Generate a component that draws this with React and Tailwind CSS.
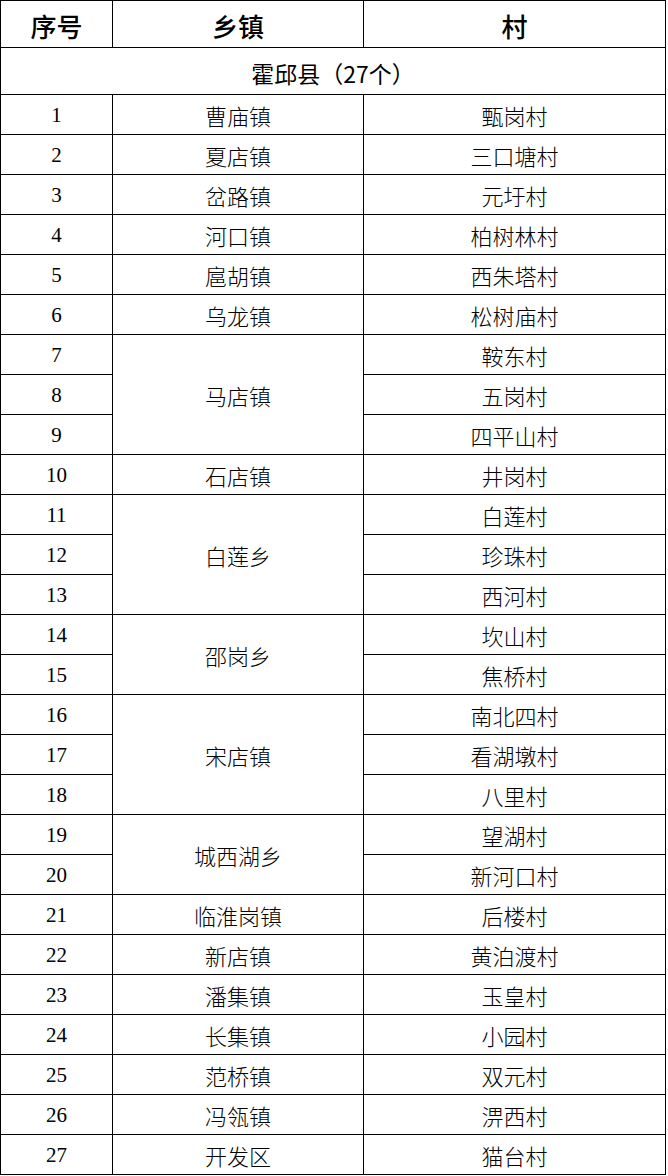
const rows = [
  ["曹庙镇", "甄岗村"],
  ["夏店镇", "三口塘村"],
  ["岔路镇", "元圩村"],
  ["河口镇", "柏树林村"],
  ["扈胡镇", "西朱塔村"],
  ["乌龙镇", "松树庙村"],
  ["马店镇", "鞍东村", 3],
  [null, "五岗村"],
  [null, "四平山村"],
  ["石店镇", "井岗村"],
  ["白莲乡", "白莲村", 3],
  [null, "珍珠村"],
  [null, "西河村"],
  ["邵岗乡", "坎山村", 2],
  [null, "焦桥村"],
  ["宋店镇", "南北四村", 3],
  [null, "看湖墩村"],
  [null, "八里村"],
  ["城西湖乡", "望湖村", 2],
  [null, "新河口村"],
  ["临淮岗镇", "后楼村"],
  ["新店镇", "黄泊渡村"],
  ["潘集镇", "玉皇村"],
  ["长集镇", "小园村"],
  ["范桥镇", "双元村"],
  ["冯瓴镇", "淠西村"],
  ["开发区", "猫台村"],
];

const spanClass = {
  1: "row-span-1",
  2: "row-span-2",
  3: "row-span-3",
};

const serif = "font-['Liberation_Serif','Noto_Sans_CJK_SC',serif]";
const sans = "font-['Noto_Sans_CJK_SC','Liberation_Sans',sans-serif]";

export default function App() {
  const cells = [];
  rows.forEach((r, i) => {
    const [town, village, span = 1] = r;
    cells.push(
      <div
        key={"n" + i}
        className={"col-start-1 border-r border-b border-black flex items-center justify-center pt-[3px] text-[21px] text-black " + serif}
      >
        {i + 1}
      </div>
    );
    if (town) {
      cells.push(
        <div
          key={"t" + i}
          className={"col-start-2 border-r border-b border-black flex items-center justify-center pt-[5px] text-[22px] font-light text-black " + serif + " " + spanClass[span]}
        >
          {town}
        </div>
      );
    }
    cells.push(
      <div
        key={"v" + i}
        className={"col-start-3 border-b border-black flex items-center justify-center pt-[5px] text-[22px] font-light text-black " + serif}
      >
        {village}
      </div>
    );
  });

  return (
    <div className="bg-white w-[668px] min-h-[1176px]">
      <div className="w-[666px] grid grid-cols-[112px_251px_301px] grid-rows-[47px_47px_repeat(27,40px)] border-l border-t border-r border-black">
        <div className={"border-r border-b border-black flex items-center justify-center pt-[3px] text-[26px] font-medium text-black " + sans}>
          序号
        </div>
        <div className={"border-r border-b border-black flex items-center justify-center pt-[3px] text-[26px] font-medium text-black " + sans}>
          乡镇
        </div>
        <div className={"border-b border-black flex items-center justify-center pt-[3px] text-[26px] font-medium text-black " + sans}>
          村
        </div>
        <div className={"col-span-3 border-b border-black flex items-center justify-center pt-[5px] text-[23px] font-normal text-black " + sans}>
          霍邱县（27个）
        </div>
        {cells}
      </div>
    </div>
  );
}
